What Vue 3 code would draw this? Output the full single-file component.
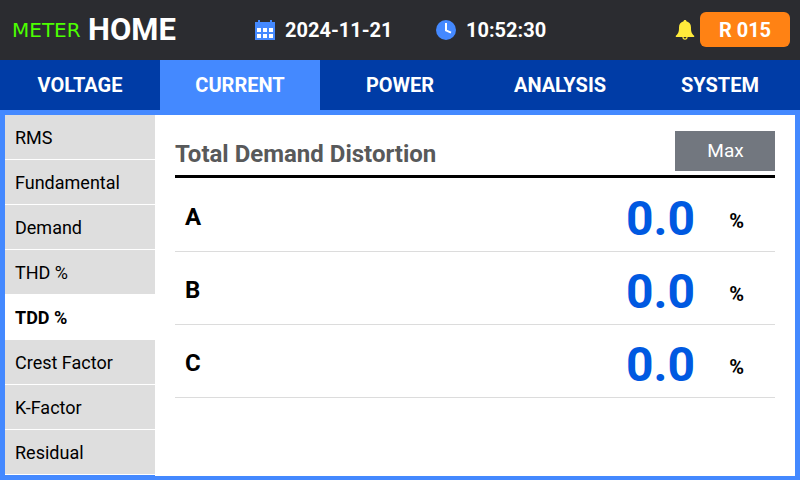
<script setup>
const tabs = ['VOLTAGE', 'CURRENT', 'POWER', 'ANALYSIS', 'SYSTEM']
const items = ['RMS', 'Fundamental', 'Demand', 'THD %', 'TDD %', 'Crest Factor', 'K-Factor', 'Residual']
const rows = [
  { phase: 'A', value: '0.0' },
  { phase: 'B', value: '0.0' },
  { phase: 'C', value: '0.0' },
]
</script>

<template>
  <div class="screen">
    <header class="top">
      <span class="brand">METER</span>
      <span class="home">HOME</span>
      <div class="info date">
        <svg width="20" height="20" viewBox="0 0 20 20" shape-rendering="crispEdges">
          <path fill="#4489ff" d="M0 2h3V0h2v2h10V0h2v2h3v18H0z" />
          <path fill="#fff" d="M2 8h4v4H2zM8 8h4v4H8zM14 8h4v4h-4zM2 14h4v4H2zM8 14h4v4H8zM14 14h4v4h-4z" />
        </svg>
        <span>2024-11-21</span>
      </div>
      <div class="info time">
        <svg width="20" height="20" viewBox="0 0 20 20">
          <circle cx="10" cy="10" r="10" fill="#4489ff" />
          <path d="M10 3v7.4l5 2.2" fill="none" stroke="#fff" stroke-width="2" />
        </svg>
        <span>10:52:30</span>
      </div>
      <svg class="bell" width="20" height="20" viewBox="0 0 20 20">
        <path fill="#ffeb3b" d="M10 0c.9 0 1.300.5 1.400 1.200C14.600 2 16 4.400 16 7.500c0 4 .5 6 3.200 8.200V17H.800v-1.300C3.500 13.500 4 11.500 4 7.500c0-3.100 1.400-5.500 4.600-6.300C8.700.5 9.100 0 10 0z" />
        <path d="M8 17a2 2.200 0 0 0 4 0" fill="none" stroke="#ffeb3b" stroke-width="1.200" />
      </svg>
      <div class="badge">R 015</div>
    </header>
    <nav class="tabs">
      <div v-for="(t, i) in tabs" :key="t" class="tab" :class="{ active: i === 1 }">{{ t }}</div>
    </nav>
    <main class="body">
      <aside class="side">
        <div v-for="(m, i) in items" :key="m" class="item" :class="{ active: i === 4 }">{{ m }}</div>
      </aside>
      <section class="content">
        <div class="heading">
          <h1>Total Demand Distortion</h1>
          <button class="max">Max</button>
        </div>
        <div v-for="r in rows" :key="r.phase" class="row">
          <span class="phase">{{ r.phase }}</span>
          <span class="value">{{ r.value }}</span>
          <span class="unit">%</span>
        </div>
      </section>
    </main>
  </div>
</template>

<style scoped>
.screen {
  width: 800px;
  height: 480px;
  display: flex;
  flex-direction: column;
  background: #4489ff;
  font-family: Roboto, sans-serif;
  overflow: hidden;
}
.top {
  box-sizing: border-box;
  height: 60px;
  display: flex;
  align-items: center;
  background: #2b2c30;
  color: #fff;
  font-weight: 700;
  white-space: nowrap;
}
.brand {
  box-sizing: border-box;
  width: 88px;
  padding-left: 12px;
  font: 400 20px 'DejaVu Sans', sans-serif;
  color: #4cff00;
}
.home {
  width: 167px;
  font-size: 31px;
  line-height: 36px;
}
.info {
  display: flex;
  align-items: center;
  gap: 10px;
  font-size: 20px;
}
.date { width: 181px; }
.time { width: 239px; }
.bell { margin-right: 5px; }
.badge {
  width: 90px;
  height: 35px;
  margin-bottom: 1px;
  line-height: 37px;
  border-radius: 6px;
  background: #ff8214;
  text-align: center;
  font-size: 20px;
}
.tabs {
  display: grid;
  grid-template-columns: repeat(5, 1fr);
  height: 50px;
}
.tab {
  background: #003ca6;
  color: #fff;
  font-size: 20px;
  font-weight: 700;
  line-height: 51px;
  height: 50px;
  text-align: center;
}
.tab.active { background: #4489ff; }
.body {
  display: flex;
  height: 361px;
  margin: 5px 5px 0;
}
.side {
  width: 150px;
  height: 360px;
}
.item {
  box-sizing: border-box;
  height: 45px;
  padding-left: 10px;
  border-bottom: 1px solid #fff;
  background: #dedede;
  color: #000;
  font-size: 18px;
  line-height: 45px;
}
.item.active {
  background: #fff;
  font-weight: 700;
  margin-top: -1px;
  padding-top: 1px;
  height: 46px;
}
.content {
  flex: 1;
  padding: 16px 20px 0;
  background: #fff;
}
.heading {
  display: flex;
  justify-content: space-between;
  height: 44px;
  border-bottom: 3px solid #000;
  margin-bottom: 1px;
}
h1 {
  margin: 0;
  padding-top: 3px;
  font-size: 24px;
  font-weight: 700;
  line-height: 40px;
  color: #58595a;
}
.max {
  width: 100px;
  height: 40px;
  padding: 0 0 0 1px;
  border: 0;
  background: #72777f;
  color: #fff;
  font: 400 19px/40px Roboto, sans-serif;
}
.row {
  display: flex;
  height: 73px;
  box-sizing: border-box;
  border-bottom: 1px solid #dcdcdc;
  padding: 0 31px 0 10px;
  font-weight: 700;
  color: #000;
}
.phase {
  flex: 1;
  font-size: 24px;
  line-height: 76px;
}
.value {
  font-size: 48px;
  line-height: 79px;
  color: #0059e1;
}
.unit {
  width: 49px;
  text-align: right;
  font-size: 20px;
  line-height: 85px;
}
</style>
